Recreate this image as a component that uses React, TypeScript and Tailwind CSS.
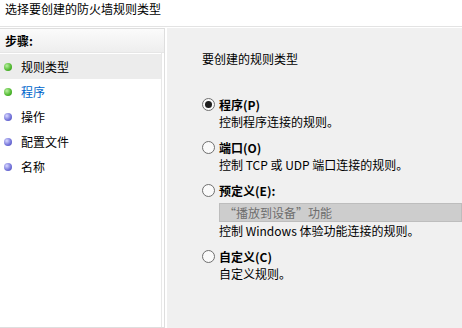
import React from "react";

const font = { fontFamily: '"Noto Sans CJK SC", "Liberation Sans", sans-serif' };

const steps = [
  { label: "规则类型", done: true, active: true },
  { label: "程序", done: true, current: true },
  { label: "操作" },
  { label: "配置文件" },
  { label: "名称" },
];

function Bullet({ green }: { green?: boolean }) {
  return (
    <span
      className={`inline-block h-[8px] w-[8px] rounded-full ${
        green
          ? "bg-[radial-gradient(circle_at_35%_35%,#b8f0a0,#4fb82e_60%,#2f8a1a)]"
          : "bg-[radial-gradient(circle_at_35%_35%,#d8d8ff,#7070d8_60%,#4a4ab0)]"
      }`}
    />
  );
}

function Radio({ checked }: { checked?: boolean }) {
  return (
    <span className="flex h-[13px] w-[13px] items-center justify-center rounded-full border border-[#6f6f6f] bg-[#fafafa]">
      {checked && <span className="h-[7px] w-[7px] rounded-full bg-[#1e1e1e]" />}
    </span>
  );
}

function Option({
  title,
  desc,
  checked,
  children,
}: {
  title: string;
  desc: string;
  checked?: boolean;
  children?: React.ReactNode;
}) {
  return (
    <div>
      <div className="flex h-[17px] items-center gap-[4px]">
        <Radio checked={checked} />
        <span className="text-[12px] font-bold leading-[17px] text-black">{title}</span>
      </div>
      {children}
      <div className="pl-[17px] text-[12px] leading-[17px] text-black">{desc}</div>
    </div>
  );
}

export default function App() {
  return (
    <div className="flex h-[328px] w-[462px] flex-col overflow-hidden bg-white" style={font}>
      <div className="h-[27px] border-b border-[#e3e3e3] pl-[5px] pt-[1px] text-[12px] leading-[16px] text-black">
        选择要创建的防火墙规则类型
      </div>
      <div className="flex flex-1 gap-[2px] pt-[1px]">
        <aside className="flex w-[165px] flex-col border border-l-0 border-[#dedede] bg-white">
          <div className="h-[24px] border-b border-[#e6e6e6] bg-[linear-gradient(#fbfbfb,#eeeeee)] pl-[5px] text-[12px] font-bold leading-[24px] text-black">
            步骤:
          </div>
          <div className="mr-[2px] flex-1 border-r border-[#e8e8e8] pt-[1px]">
            {steps.map((s) => (
              <div
                key={s.label}
                className={`flex h-[25px] items-center gap-[9px] pl-[4px] text-[12px] ${
                  s.active ? "bg-[#ececec]" : ""
                } ${s.current ? "text-[#0066cc]" : "text-black"}`}
              >
                <Bullet green={s.done} />
                <span>{s.label}</span>
              </div>
            ))}
          </div>
        </aside>
        <main className="flex-1 bg-[#f0f0f0] pl-[35px] pt-[23px]">
          <div className="text-[12px] leading-[16px] text-black">要创建的规则类型</div>
          <div className="mt-[29px] flex flex-col gap-[9px]">
            <Option checked title="程序(P)" desc="控制程序连接的规则。" />
            <Option title="端口(O)" desc="控制 TCP 或 UDP 端口连接的规则。" />
            <Option title="预定义(E):" desc="控制 Windows 体验功能连接的规则。">
              <div className="ml-[17px] mt-[4px] h-[19px] border border-[#bdbdbd] bg-[#cdcdcd] pl-[4px] text-[12px] leading-[17px] text-[#6d6d6d]">
                “播放到设备”功能
              </div>
            </Option>
            <Option title="自定义(C)" desc="自定义规则。" />
          </div>
        </main>
      </div>
    </div>
  );
}
